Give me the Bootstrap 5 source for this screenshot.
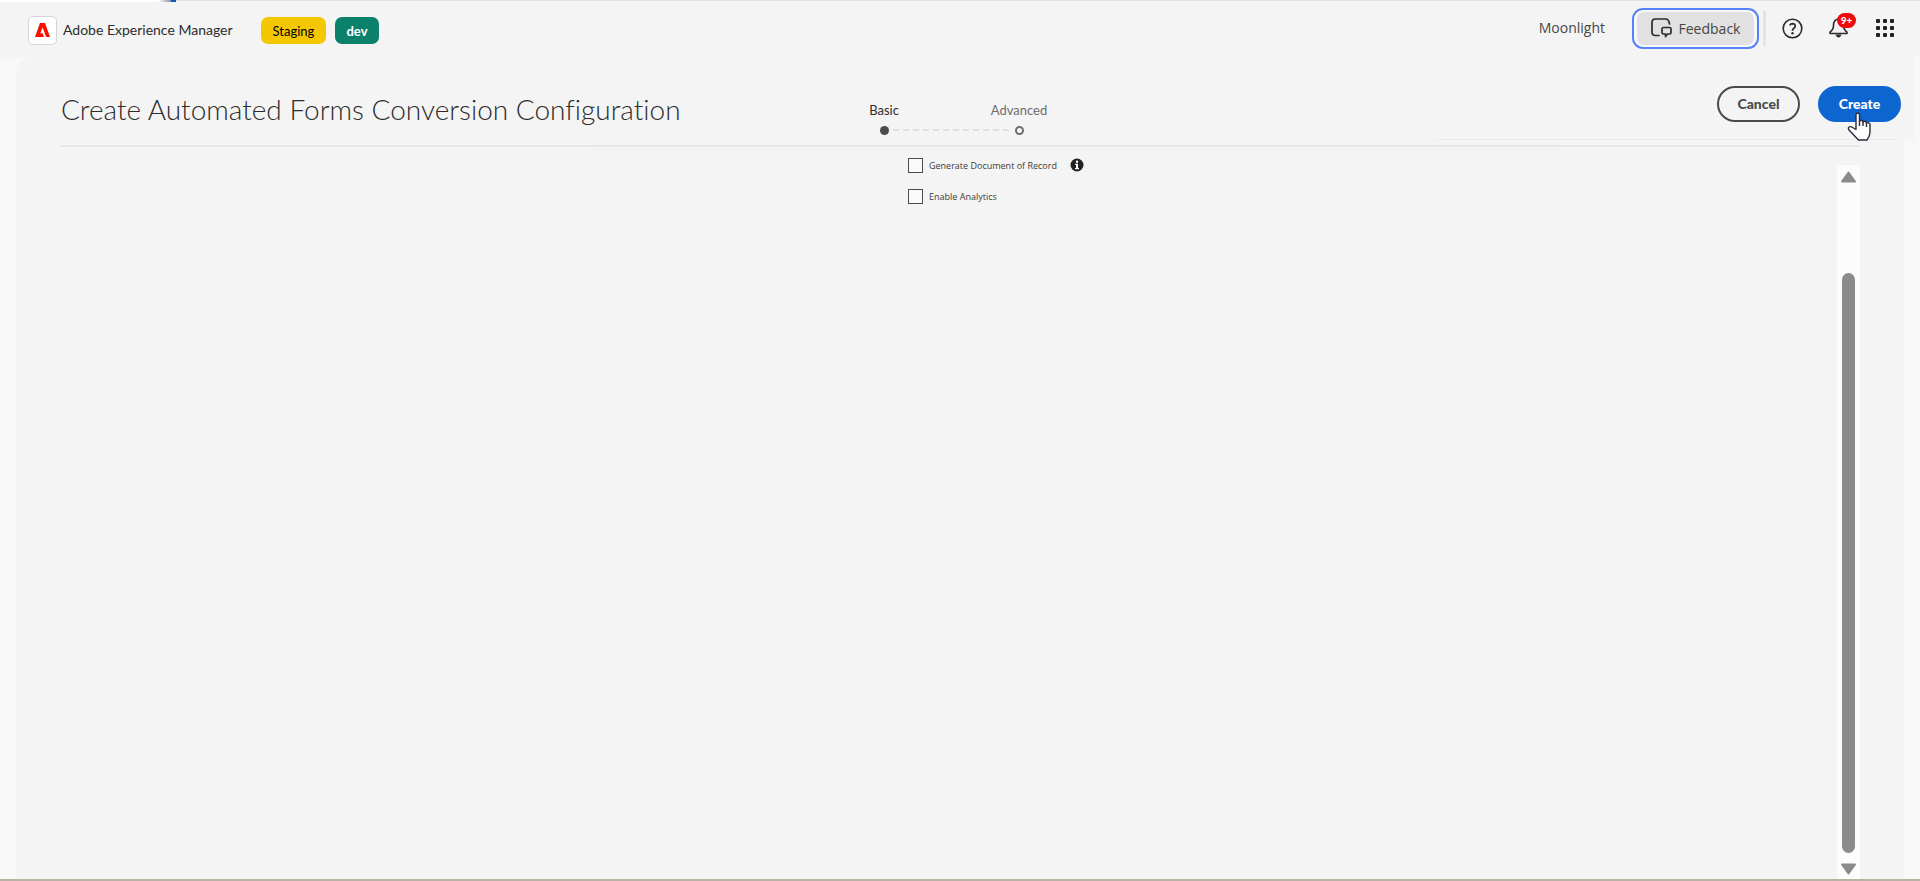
<!DOCTYPE html>
<html lang="en">
<head>
<meta charset="utf-8">
<meta name="viewport" content="width=device-width, initial-scale=1">
<title>Create Automated Forms Conversion Configuration</title>
<link href="https://cdn.jsdelivr.net/npm/bootstrap@5.3.0/dist/css/bootstrap.min.css" rel="stylesheet">
<style>
  body { font-family: "Lato", "Open Sans", sans-serif; font-size: 14px; line-height: 20px; color: #2c2c2c; background: #f8f8f8; font-variant-ligatures: none; }
  svg { display: block; }
  a { color: inherit; text-decoration: none; }

  .topbar { height: 57px; padding: 0 25px 0 28px; background: #f4f4f4; border-top: 1px solid #e1e1e1; }
  .load-line { left: 0; top: -1px; width: 176px; height: 2px; background: linear-gradient(90deg, #fff 90%, #8a94a8 97%, #0d55b8 97%); }
  .logo-box { width: 29px; height: 29px; border: 1px solid #d5d5d5; border-radius: 5px; background: #fff; }
  .brand-link { margin-top: 2px; }
  .brand-name { min-width: 176px; font-size: 14px; margin: 0 22px 0 6px; }
  .env-tag { height: 27px; border-radius: 7px; font-size: 13px; line-height: 28px; text-align: center; }
  .env-staging { width: 65px; margin-right: 9px; background: #f5c700; color: #000; }
  .env-dev { width: 44px; background: #0b806b; color: #fff; font-weight: 700; }
  .org-name { font-family: "Open Sans", sans-serif; color: #464646; margin-right: 27px; }
  .btn-feedback { height: 41px; width: 127px; padding: 2px 3px; border: 2px solid #5681ff; border-radius: 11px; background: #f8f8f8; font-family: "Open Sans", sans-serif; font-size: 14px; }
  .btn-feedback:hover { border-color: #5681ff; background: #f8f8f8; }
  .btn-feedback > span { height: 33px; border-radius: 7px; background: #e1e1e1; color: #464646; font-weight: 500; gap: 7px; }
  .bar-rule { width: 3px; height: 35px; margin: 0 16px 0 4px; background: #e3e3e3; }
  .btn-icon { border: 0; padding: 0; background: none; color: #2c2c2c; }
  .bar-tools { margin-bottom: 2px; }
  .bar-tools .btn-icon + .btn-icon { margin-left: 25px; }
  .count-tag { left: 9px; top: -5px; width: 19px; height: 15px; border-radius: 8px; background: #f00a0a; color: #fff; font-size: 10px; font-weight: 900; line-height: 15px; }

  .sheet { margin: 0 16px; background: #f4f4f4; border-radius: 16px 0 0 0; }
  .sheet-head { margin: 0 44px 0 45px; height: 90px; border-bottom: 2px solid #e8e8e8; }
  .head-wing { top: 0; right: -54px; width: 480px; height: 83px; background: #f4f4f4; }
  .head-wing::after { content: ""; position: absolute; left: 0; right: 14px; bottom: 0; height: 1px; background: #ebebeb; }
  .page-title { font-weight: 300; font-size: 28px; line-height: 36px; margin-top: 34px; }
  .steps { width: 191px; top: 43px; left: 795px; }
  .step { font-size: 13px; line-height: 20px; width: 56px; color: #2c2c2c; }
  .step-next { color: #6e6e6e; }
  .step-dot { width: 9px; height: 9px; margin-top: 6px; border-radius: 50%; background: #4b4b4b; }
  .step-next .step-dot { background: #fafafa; border: 2px solid #6e6e6e; }
  .step-line { width: 118px; height: 2px; left: 37px; top: 29px; background: repeating-linear-gradient(90deg, #e0e0e0 0 6px, transparent 6px 10px); }
  .actions { margin-right: -41px; margin-top: 29px; gap: 18px; }
  .btn-pill { height: 36px; width: 83px; border-radius: 18px; border: 2px solid #4b4b4b; padding: 0 0 2px; font-size: 14px; font-weight: 900; color: #4b4b4b; }
  .btn-pill.btn-main { border-color: #0d66d0; background: #0d66d0; color: #fff; }
  .pointer { left: 27px; top: 24px; }
  .sub-rule { height: 1px; margin: 2px 348px 0 581px; background: #ebebeb; }

  .sheet-body { margin: 0 44px 0 45px; }
  .options { padding-top: 8px; padding-left: 847px; }
  .option-row { height: 31px; }
  .option-box.option-box { width: 15px; height: 15px; border: 1px solid #4b4b4b; border-radius: 0; margin: 0; background-color: #fafafa; }
  .option-text { font-family: "Open Sans", sans-serif; font-size: 9px; line-height: 15px; margin-left: 6px; color: #3c3c3c; }
  .info-mark { margin-left: 13px; }
  .scroller { width: 23px; margin-top: 15px; padding: 6px 0 4px; background: #fcfcfc; }
  .thumb { width: 13px; border-radius: 7px; background: #8b8b8b; margin: 90px 0 10px; }
  .foot-line { height: 2px; background: #bbb2a6; }
</style>
</head>
<body>
<div class="d-flex flex-column vh-100">
  <header class="topbar d-flex align-items-center justify-content-between position-relative flex-shrink-0">
    <span class="load-line position-absolute"></span>
    <div class="brand-link d-flex align-items-center">
      <a href="#" class="d-flex align-items-center">
        <span class="logo-box d-flex align-items-center justify-content-center">
          <svg width="15" height="14" viewBox="0 0 15 14" fill="#fa0f00"><path d="M5 0h5l5 14h-3.800L7.600 4.400 5.300 10.300h2.400L8.900 14H0z"/></svg>
        </span>
        <span class="brand-name">Adobe Experience Manager</span>
      </a>
      <span class="env-tag env-staging">Staging</span>
      <span class="env-tag env-dev">dev</span>
    </div>
    <div class="bar-tools d-flex align-items-center">
      <span class="org-name">Moonlight</span>
      <button type="button" class="btn btn-feedback">
        <span class="d-flex align-items-center justify-content-center">
          <svg width="21" height="20" viewBox="0 0 21 20" fill="none" stroke="#2c2c2c" stroke-width="1.700" stroke-linejoin="round" stroke-linecap="round"><path d="M8 17.500H4.500Q1 17.500 1 14V4.500Q1 1 4.500 1H14.500Q18 1 18.500 6"/><path d="M12.500 9.500h6Q20 9.500 20 11v3.500Q20 16 18.500 16H16.500L14.500 18.500V16h-2Q11 16 11 14.500V11Q11 9.500 12.500 9.500z"/></svg>
          Feedback
        </span>
      </button>
      <span class="bar-rule"></span>
      <button type="button" class="btn-icon" aria-label="Help">
        <svg width="21" height="21" viewBox="0 0 21 21" fill="none" stroke="currentColor" stroke-width="1.600"><circle cx="10.500" cy="10.500" r="9.300"/><path d="M7.800 7.300Q8.600 5.600 10.600 5.600 13.400 5.700 13.200 8.200 13.100 9.500 11.700 10.400 10.500 11.300 10.500 12.700" stroke-width="1.800"/><circle cx="10.500" cy="15.200" r="1.200" fill="currentColor" stroke="none"/></svg>
      </button>
      <button type="button" class="btn-icon position-relative" aria-label="Notifications">
        <svg width="22" height="20" viewBox="0 0 22 20" fill="none" stroke="currentColor" stroke-width="1.600" stroke-linejoin="round"><path d="M10.500 1Q5.500 1.500 5.500 7.500 5.500 11.500 2 14.200V15.500H19V14.200Q15.500 11.500 15.500 7.500 15.500 1.500 10.500 1z"/><path d="M7.500 16.500h6Q12.500 19.500 10.500 19.500T7.500 16.500z" fill="currentColor" stroke="none"/></svg>
        <span class="count-tag position-absolute text-center">9+</span>
      </button>
      <button type="button" class="btn-icon" aria-label="Apps">
        <svg width="20" height="18" viewBox="0 0 20 18" fill="#222"><g id="r"><rect x="1" width="4" height="4" rx="1"/><rect x="8" width="4" height="4" rx="1"/><rect x="15" width="4" height="4" rx="1"/></g><use href="#r" y="7"/><use href="#r" y="14"/></svg>
      </button>
    </div>
  </header>

  <main class="sheet d-flex flex-column flex-grow-1">
    <div class="sheet-head d-flex justify-content-between align-items-start position-relative flex-shrink-0">
      <span class="head-wing position-absolute"></span>
      <h1 class="page-title mb-0 text-nowrap">Create Automated Forms Conversion Configuration</h1>
      <div class="steps position-absolute d-flex justify-content-between">
        <span class="step-line position-absolute"></span>
        <div class="step d-flex flex-column align-items-center">Basic<span class="step-dot"></span></div>
        <div class="step step-next d-flex flex-column align-items-center">Advanced<span class="step-dot"></span></div>
      </div>
      <div class="actions d-flex position-relative">
        <button type="button" class="btn btn-pill">Cancel</button>
        <button type="button" class="btn btn-pill btn-main position-relative">Create
          <svg class="pointer position-absolute" width="26" height="30" viewBox="0 0 26 30" fill="#fff" stroke="#2b2b3c" stroke-width="1.400" stroke-linejoin="round"><path d="M9 17.500V3Q9 1 10.700 1T12.500 3V9.500Q13 8 14.500 8.300T16 10.500Q16.500 9 18 9.300T19.500 11.500Q20.200 10.300 21.700 10.800T23 13V20Q23 24 20 28H11.500L2.500 18.500Q.5 16 2 15T5.500 15.500z"/><path d="M12.500 9.500v4.500M16 10.500V14M19.500 11.500V15" fill="none"/></svg>
        </button>
      </div>
    </div>
    <div class="sub-rule flex-shrink-0"></div>
    <div class="sheet-body d-flex justify-content-between flex-grow-1">
      <div class="options">
        <div class="option-row d-flex align-items-start">
          <input class="form-check-input option-box" type="checkbox" id="dor">
          <label class="option-text" for="dor">Generate Document of Record</label>
          <svg class="info-mark" width="14" height="14" viewBox="0 0 14 14"><circle cx="7" cy="7" r="6.500" fill="#222"/><path d="M5.200 5.800H8v4.200h1v1.200H5V10h1V7h-.8z" fill="#fff"/><circle cx="7" cy="3.700" r="1.200" fill="#fff"/></svg>
        </div>
        <div class="option-row d-flex align-items-start">
          <input class="form-check-input option-box" type="checkbox" id="ana">
          <label class="option-text" for="ana">Enable Analytics</label>
        </div>
      </div>
      <div class="scroller d-flex flex-column align-items-center">
        <svg width="15" height="12" viewBox="0 0 15 12" fill="#8b8b8b" stroke="#8b8b8b" stroke-width="2" stroke-linejoin="round"><path d="M7.500 1.500L14 10.500H1z"/></svg>
        <div class="thumb flex-grow-1"></div>
        <svg width="15" height="12" viewBox="0 0 15 12" fill="#8b8b8b" stroke="#8b8b8b" stroke-width="2" stroke-linejoin="round"><path d="M7.500 10.500L14 1.500H1z"/></svg>
      </div>
    </div>
  </main>
  <div class="foot-line flex-shrink-0"></div>
</div>
<script src="https://cdn.jsdelivr.net/npm/bootstrap@5.3.0/dist/js/bootstrap.bundle.min.js"></script>
</body>
</html>
